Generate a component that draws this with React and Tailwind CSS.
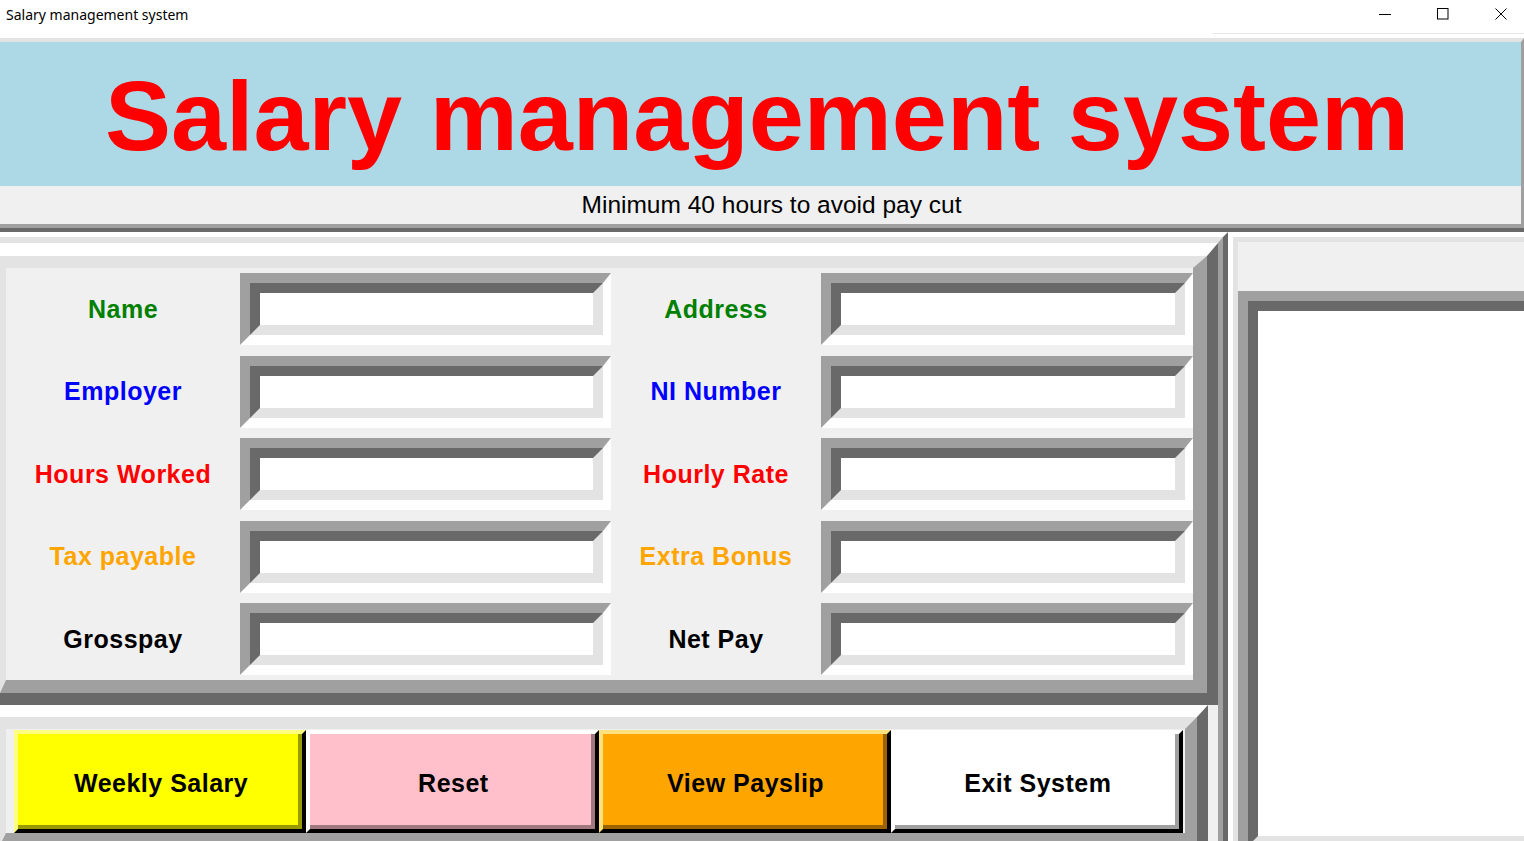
import React from 'react';

const rows = [
  { left: 'Name', right: 'Address', color: 'text-[#008000]' },
  { left: 'Employer', right: 'NI Number', color: 'text-[#0000ff]' },
  { left: 'Hours Worked', right: 'Hourly Rate', color: 'text-[#ff0000]' },
  { left: 'Tax payable', right: 'Extra Bonus', color: 'text-[#ffa500]' },
  { left: 'Grosspay', right: 'Net Pay', color: 'text-black' },
];

const buttons = [
  { text: 'Weekly Salary', outer: 'border-t-[#ffff7f] border-l-[#ffff7f]', inner: 'bg-[#ffff00] border-b-[#999900] border-r-[#999900]' },
  { text: 'Reset', outer: 'border-t-white border-l-white', inner: 'bg-[#ffc0cb] border-b-[#a07880] border-r-[#a07880]' },
  { text: 'View Payslip', outer: 'border-t-[#ffe07f] border-l-[#ffe07f]', inner: 'bg-[#ffa500] border-b-[#9c6400] border-r-[#9c6400]' },
  { text: 'Exit System', outer: 'border-t-white border-l-white', inner: 'bg-white border-b-[#a0a0a0] border-r-[#a0a0a0]' },
];

// sunken tk entry box
const Entry = () => (
  <div className="h-[72px] w-full border-t-[10px] border-l-[10px] border-b-[10px] border-r-[8px] border-t-[#a0a0a0] border-l-[#a0a0a0] border-b-white border-r-white">
    <div className="h-full w-full bg-white border-[10px] border-t-[#696969] border-l-[#696969] border-b-[#e3e3e3] border-r-[#e3e3e3]" />
  </div>
);

const Label = ({ text, color }) => (
  <div className="flex items-center justify-center">
    <span className={`text-[25px] font-bold tracking-[0.5px] leading-none ${color}`}>{text}</span>
  </div>
);

const App = () => {
  return (
    <div className="w-[1524px] h-[841px] overflow-hidden bg-white font-['Liberation_Sans',Arial,sans-serif]">
      {/* window title bar */}
      <div className="flex flex-col h-[38px]">
        <div className="flex items-center h-[28px]">
          <span className="pl-[6px] text-[14px] text-black font-['Noto_Sans',sans-serif]">Salary management system</span>
          <div className="ml-auto flex items-center gap-[46px] pr-[17px]">
            <svg width="12" height="12" viewBox="0 0 12 12"><line x1="0" y1="6.5" x2="12" y2="6.5" stroke="#000" strokeWidth="1" /></svg>
            <svg width="12" height="12" viewBox="0 0 12 12"><rect x="0.5" y="0.5" width="10.5" height="10.5" fill="none" stroke="#000" strokeWidth="1" /></svg>
            <svg width="12" height="12" viewBox="0 0 12 12"><path d="M0.5 0.5 L11.5 11.5 M11.5 0.5 L0.5 11.5" stroke="#000" strokeWidth="1" /></svg>
          </div>
        </div>
        <div className="h-[5px]" />
        <div className="ml-auto w-[311px] h-px bg-[#e5e5e5]" />
      </div>

      {/* title frame */}
      <div className="border-b-4 border-b-[#696969]">
        <div className="border-t-4 border-t-[#e3e3e3] border-r-[3px] border-r-[#a0a0a0] border-b-4 border-b-[#a0a0a0]">
          <div className="h-[144px] bg-[#add8e6] flex items-center justify-center pt-[2px] pr-[7px]">
            <h1 className="text-[99px] font-bold text-[#ff0000] leading-none whitespace-nowrap">Salary management system</h1>
          </div>
          <div className="h-[38px] bg-[#f0f0f0] flex items-center justify-center pl-[22px]">
            <span className="text-[24.5px] text-black leading-none">Minimum 40 hours to avoid pay cut</span>
          </div>
        </div>
      </div>

      {/* body */}
      <div className="flex h-[609px] overflow-hidden">
        {/* left frame */}
        <div className="w-[1228px] shrink-0 border-t-[5px] border-t-white border-r-[5px] border-r-[#696969]">
          <div className="h-full flex flex-col border-t-[6px] border-t-[#e3e3e3] border-r-[5px] border-r-[#a0a0a0] bg-[#f0f0f0]">
            {/* form frame */}
            <div className="shrink-0 border-t-[13px] border-t-white border-r-[11px] border-r-[#696969] border-b-[12px] border-b-[#696969]">
              <div className="border-t-[12px] border-t-[#e3e3e3] border-l-[6px] border-l-[#e3e3e3] border-r-[14px] border-r-[#a0a0a0] border-b-[13px] border-b-[#a0a0a0] bg-[#f0f0f0]">
                <div className="grid grid-cols-[234px_371px_210px_372px] grid-rows-[82px_83px_82px_83px_82px] h-[412px]">
                  {rows.map((r) => (
                    <React.Fragment key={r.left}>
                      <Label text={r.left} color={r.color} />
                      <div className="flex items-center"><Entry /></div>
                      <Label text={r.right} color={r.color} />
                      <div className="flex items-center"><Entry /></div>
                    </React.Fragment>
                  ))}
                </div>
              </div>
            </div>

            {/* buttons frame */}
            <div className="shrink-0 w-[1208px] border-t-[12px] border-t-white border-r-[11px] border-r-[#696969]">
              <div className="border-t-[12px] border-t-[#e3e3e3] border-l-[6px] border-l-[#e3e3e3] border-r-[12px] border-r-[#a0a0a0] border-b-[12px] border-b-[#a0a0a0] bg-[#f0f0f0] pl-[8px] pr-[2px] pt-px">
                <div className="grid grid-cols-4 h-[103px]">
                  {buttons.map((b) => (
                    <div key={b.text} className={`h-full border-4 border-b-black border-r-black ${b.outer}`}>
                      <div className={`h-full flex items-center justify-center pt-[7px] pl-[6px] border-b-4 border-r-4 ${b.inner}`}>
                        <span className="text-[25px] font-bold tracking-[0.5px] leading-none text-black">{b.text}</span>
                      </div>
                    </div>
                  ))}
                </div>
              </div>
            </div>
          </div>
        </div>

        {/* right frame */}
        <div className="flex-1 border-t-[5px] border-t-white border-l-[5px] border-l-white">
          <div className="h-full flex flex-col border-t-[5px] border-t-[#e3e3e3] border-l-[5px] border-l-[#e3e3e3] bg-[#f0f0f0]">
            <div className="h-[49px] shrink-0" />
            <div className="shrink-0 border-t-[10px] border-l-[10px] border-t-[#a0a0a0] border-l-[#a0a0a0]">
              <div className="border-t-[10px] border-l-[10px] border-b-[10px] border-t-[#696969] border-l-[#696969] border-b-[#e3e3e3] bg-white">
                <div className="h-[525px]" />
              </div>
            </div>
          </div>
        </div>
      </div>
    </div>
  );
};

export default App;
